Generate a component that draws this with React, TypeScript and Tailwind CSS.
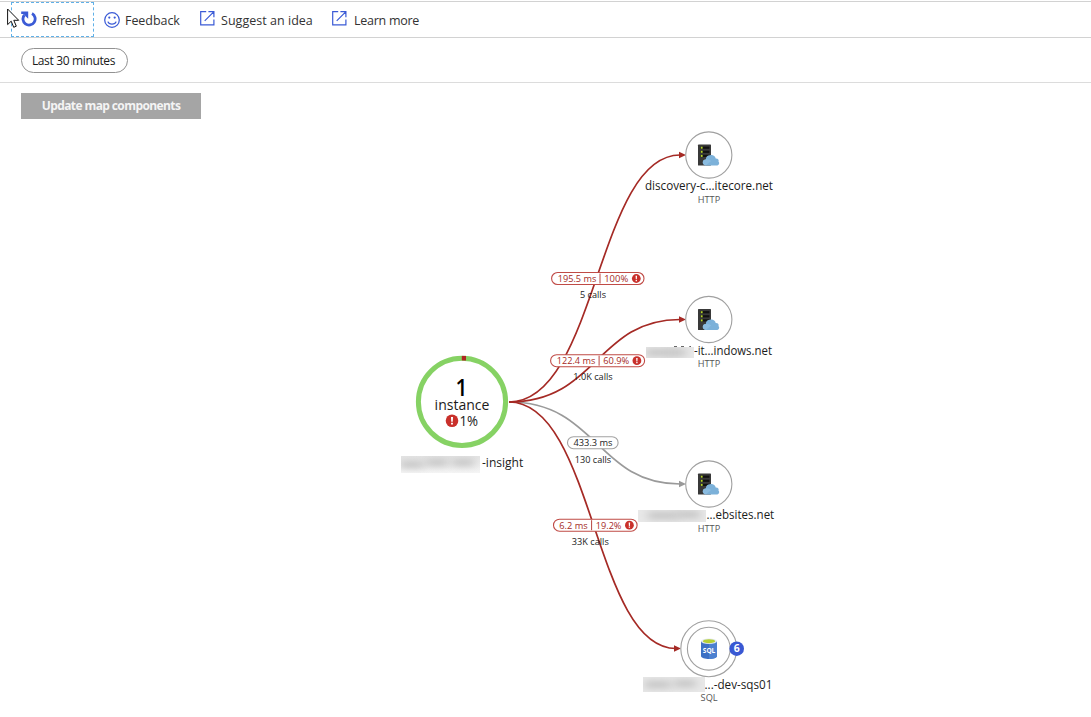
import React from "react";

const RED = "#a52a25";
const FONT = "font-['Open_Sans','Noto_Sans',sans-serif]";

type LabelProps = {
  x: number;
  y: number;
  w: number;
  size: number;
  fill?: string;
  weight?: number;
  children: string;
};

function Label({ x, y, w, size, fill = "#1b1b1b", weight = 400, children }: LabelProps) {
  return (
    <text x={x} y={y} fontSize={size} fill={fill} fontWeight={weight} textLength={w} lengthAdjust="spacingAndGlyphs">
      {children}
    </text>
  );
}

function RefreshIcon() {
  return (
    <svg width="16" height="17" viewBox="0 0 16 17" fill="none">
      <path d="M11 2.6A6.1 6.1 0 1 1 3.4 4" stroke="#3b5bd6" strokeWidth="2.8" />
      <path d="M0.2 0.6H7.2V7.8L4.6 5.2L2.6 3H0.2Z" fill="#3b5bd6" />
    </svg>
  );
}

function SmileIcon() {
  return (
    <svg width="16" height="16" viewBox="0 0 16 16" fill="none" stroke="#3b5bd6" strokeWidth="1.25">
      <circle cx="8" cy="8" r="7.3" />
      <path d="M3.9 9.6C4.9 13 11.1 13 12.1 9.6" />
      <circle cx="5.3" cy="5.6" r="1.1" fill="#3b5bd6" stroke="none" />
      <circle cx="10.7" cy="5.6" r="1.1" fill="#3b5bd6" stroke="none" />
    </svg>
  );
}

function ExternalIcon() {
  return (
    <svg width="15" height="15" viewBox="0 0 15 15" fill="none" stroke="#3b5bd6" strokeWidth="1.2">
      <path d="M6.2 .7H.7V13.9H13.9V8.6M4.7 9.8L13.2 1.3M8.4 .7H13.9V6.2" />
    </svg>
  );
}

function Cursor() {
  return (
    <svg className="absolute left-[7px] top-[8px]" width="13" height="21" viewBox="0 0 13 21">
      <path d="M.6 1V16.6L4.2 13.2L6.7 19.3L9.3 18.2L6.8 12.3H11.7Z" fill="#fff" stroke="#111" strokeWidth="1" />
    </svg>
  );
}

function Alert({ x, y, r }: { x: number; y: number; r: number }) {
  return (
    <g transform={`translate(${x} ${y}) scale(${r / 6})`}>
      <circle r="6" fill="#c9302b" />
      <path d="M-1-3.6H1L.7 1H-.7ZM-.9 1.9H.9V3.6H-.9Z" fill="#fff" />
    </g>
  );
}

function ServerNode({ y }: { y: number }) {
  return (
    <g transform={`translate(708.8 ${y})`}>
      <circle r="23.1" fill="#fff" stroke="#a0a0a0" strokeWidth="1.1" />
      <rect x="-10.8" y="-10.4" width="13" height="21" rx=".6" fill="#393939" />
      {[-8.4, -4.3, -0.2].map((t) => (
        <g key={t}>
          <rect x="-8.4" y={t} width="9" height="2.2" fill="#111" />
          <rect x="-8" y={t + 0.1} width="1.8" height="2" fill="#b6d52b" />
        </g>
      ))}
      <path
        d="M-2.9 10.4C-7.4 9.9-6.8 4.2-3 4.4C-3.1 1.8-.9.2 1.2.3C3.2-.6 6.5.5 6.9 3.5C9.5 3.4 10.3 5.1 9.7 6.4C11.2 8 10 10.4 8 10.4Z"
        fill="#7cb1d9"
      />
      <path d="M-3 4.4C-.8 4.1.6 5.1 2.3 6.1L-3 10.4C-7.1 9.5-6.6 4.4-3 4.4Z" fill="#8bbce0" />
    </g>
  );
}

function SqlNode() {
  return (
    <g>
      <circle cx="708.8" cy="648.7" r="28" fill="#fff" stroke="#a0a0a0" strokeWidth="1.1" />
      <circle cx="708.8" cy="648.7" r="21.4" fill="#fff" stroke="#a0a0a0" strokeWidth="1.1" />
      <path d="M701 641V656C701 659.9 717 659.9 717 656V641Z" fill="#3c70c4" />
      <path d="M709 641H717V656C717 658 713 659 709 659Z" fill="#4c80d0" />
      <ellipse cx="709" cy="641.3" rx="8" ry="2.8" fill="#e5ebf0" />
      <ellipse cx="709" cy="641.2" rx="6.2" ry="2" fill="#b4cf35" />
      <Label x={702.8} y={653} w={12.5} size={7.5} weight={700} fill="#fff">SQL</Label>
      <circle cx="736.7" cy="648.7" r="7.3" fill="#3958d3" />
      <Label x={733.7} y={652.3} w={6} size={10} weight={700} fill="#fff">6</Label>
    </g>
  );
}

type PillProps = { x: number; y: number; w: number; time: string; timeX: number; timeW: number; rate?: string; rateX?: number; rateW?: number };

function Pill({ x, y, w, time, timeX, timeW, rate, rateX = 0, rateW = 0 }: PillProps) {
  return (
    <g>
      <rect x={x} y={y - 6} width={w} height="12" rx="6" fill="#fff" stroke={rate ? "#c04b46" : "#a3a3a3"} strokeWidth="1.1" />
      <Label x={timeX} y={y + 3.4} w={timeW} size={9.2} fill={rate ? RED : "#222"}>{time}</Label>
      {rate && (
        <>
          <path d={`M${rateX - 4.2} ${y - 5}V${y + 5}`} stroke="#b8443f" />
          <Label x={rateX} y={y + 3.4} w={rateW} size={9.2} fill={RED}>{rate}</Label>
          <Alert x={x + w - 7.7} y={y} r={4.4} />
        </>
      )}
    </g>
  );
}

const smudges = [
  { id: "a", x: 401, y: 456, w: 79, h: 17, fade: true, spots: [[400, 461, 24], [426, 459, 22], [452, 459, 22]] },
  { id: "b", x: 646, y: 347, w: 48, h: 11, fade: false, spots: [[646, 349, 26], [668, 349, 18]] },
  { id: "c", x: 638, y: 510, w: 68, h: 12, fade: false, spots: [[648, 512, 30], [676, 511, 24]] },
  { id: "d", x: 643, y: 677, w: 62, h: 15, fade: false, spots: [[645, 681, 26], [674, 680, 22]] },
];

function Redactions() {
  return (
    <g>
      <defs>
        <filter id="soft" x="-50%" y="-150%" width="200%" height="400%">
          <feGaussianBlur stdDeviation="5 3.5" />
        </filter>
        <linearGradient id="fade" x2="0" y2="1">
          <stop offset="0" stopColor="#e4e4e4" />
          <stop offset="1" stopColor="#f5f5f5" />
        </linearGradient>
      </defs>
      {smudges.map((s) => (
        <g key={s.id}>
          <clipPath id={`clip-${s.id}`}>
            <rect x={s.x} y={s.y} width={s.w} height={s.h} />
          </clipPath>
          <g clipPath={`url(#clip-${s.id})`}>
            <rect x={s.x} y={s.y} width={s.w} height={s.h} fill={s.fade ? "url(#fade)" : "#e8e8e8"} />
            {s.spots.map(([x, y, w]) => (
              <rect key={x} x={x} y={y} width={w} height="7" fill="#c2c2c2" filter="url(#soft)" />
            ))}
          </g>
        </g>
      ))}
    </g>
  );
}

function ApplicationMap() {
  return (
    <svg width="1091" height="598" viewBox="0 119 1091 598" className={`block ${FONT}`}>
      <g fill="none" strokeWidth="1.7">
        <path d="M509 402C597 402 597 484 680 484" stroke="#9a9a9a" />
        <path d="M509 402C597 402 597 155 680 155" stroke={RED} />
        <path d="M509 402C597 402 597 319.5 680 319.5" stroke={RED} />
        <path d="M509 402C594 402 594 648.5 676 648.5" stroke={RED} />
      </g>
      <path d="M679 151.8V158.2L686 155ZM679 316.3V322.7L686 319.5ZM674 645.3V651.7L681 648.5Z" fill={RED} />
      <path d="M679 480.8V487.2L686 484Z" fill="#999" />

      <circle cx="462" cy="401.8" r="43.6" fill="#fff" stroke="#86d264" strokeWidth="5" />
      <path d="M461.8 358.2H466" stroke="#ad2722" strokeWidth="4.6" />
      <Label x={455.4} y={396} w={12} size={22.5} weight={600} fill="#000">1</Label>
      <Label x={434.6} y={410} w={54.8} size={14.5}>instance</Label>
      <Alert x={452} y={420.8} r={6.3} />
      <Label x={459.4} y={426.3} w={18.6} size={14.8}>1%</Label>
      <Label x={482} y={467.3} w={41.3} size={12}>-insight</Label>

      <Pill x={551.6} y={278.5} w={92.4} time="195.5 ms" timeX={557.8} timeW={38.5} rate="100%" rateX={604.2} rateW={24} />
      <Label x={580} y={298} w={26} size={9.2}>5 calls</Label>
      <Pill x={550.6} y={360.7} w={94} time="122.4 ms" timeX={556.8} timeW={38.5} rate="60.9%" rateX={603.3} rateW={26} />
      <Label x={573.3} y={380.3} w={39.4} size={9.2}>1.0K calls</Label>
      <Pill x={567.5} y={442.7} w={50.6} time="433.3 ms" timeX={573.5} timeW={39} />
      <Label x={574.8} y={463} w={36.4} size={9.2}>130 calls</Label>
      <Pill x={553.5} y={525.2} w={83.6} time="6.2 ms" timeX={559.3} timeW={28.4} rate="19.2%" rateX={595.8} rateW={25.6} />
      <Label x={571.8} y={545} w={37} size={9.2}>33K calls</Label>

      <ServerNode y={155} />
      <ServerNode y={319.5} />
      <ServerNode y={484} />
      <SqlNode />

      <Label x={645} y={190.4} w={128} size={12}>discovery-c...itecore.net</Label>
      <Label x={694} y={355.4} w={78} size={12}>-it...indows.net</Label>
      <Label x={706.5} y={519.4} w={67.7} size={12}>...ebsites.net</Label>
      <Label x={704.5} y={689.4} w={67.9} size={12}>...-dev-sqs01</Label>
      {[202.5, 367, 531.7].map((y) => (
        <Label key={y} x={697.8} y={y} w={22.4} size={9} fill="#555">HTTP</Label>
      ))}
      <Label x={700.6} y={700.8} w={17} size={9} fill="#555">SQL</Label>
      <path d="M674 346.6H677M681 346.6H684M689.3 346.6H691" stroke="#444" strokeWidth=".9" />
      <Redactions />
    </svg>
  );
}

export default function App() {
  return (
    <div className={`relative h-[717px] w-[1091px] overflow-hidden bg-white text-[12.5px] text-[#333] ${FONT}`}>
      <header className="mt-px flex h-[37px] items-center border-y border-[#d2d2d2]">
        <button className="ml-[11px] flex h-[35px] w-[83px] items-center gap-[5px] border border-dashed border-[#5fb0e8] pl-[9px]">
          <RefreshIcon />
          <span className="pt-[3px] tracking-[-0.3px] whitespace-nowrap">Refresh</span>
        </button>
        <button className="ml-[10px] flex w-[95px] items-center gap-[5px]">
          <SmileIcon />
          <span className="pt-[3px] tracking-[-0.05px] whitespace-nowrap">Feedback</span>
        </button>
        <button className="flex w-[132px] items-center gap-[6px] pl-[1px]">
          <span className="-mt-[3px]"><ExternalIcon /></span>
          <span className="pt-[3px] tracking-[0.03px] whitespace-nowrap">Suggest an idea</span>
        </button>
        <button className="flex items-center gap-[7px] pl-[1px]">
          <span className="-mt-[3px]"><ExternalIcon /></span>
          <span className="pt-[3px] tracking-[-0.27px] whitespace-nowrap">Learn more</span>
        </button>
      </header>
      <div className="flex h-[45px] items-center border-b border-[#dcdcdc] pl-[21px]">
        <button className="flex h-[25px] w-[107px] items-center justify-center rounded-full border border-[#929292] pt-[2px] pr-[2px] text-[12px] tracking-[-0.35px] whitespace-nowrap text-[#1b1b1b]">
          Last 30 minutes
        </button>
      </div>
      <div className="flex h-[36px] items-end pl-[21px]">
        <button className="flex h-[26px] w-[180px] items-center justify-center bg-[#a5a5a5] text-[12px] font-bold tracking-[-0.6px] whitespace-nowrap text-[#f4f4f4]">
          Update map components
        </button>
      </div>
      <ApplicationMap />
      <Cursor />
    </div>
  );
}
